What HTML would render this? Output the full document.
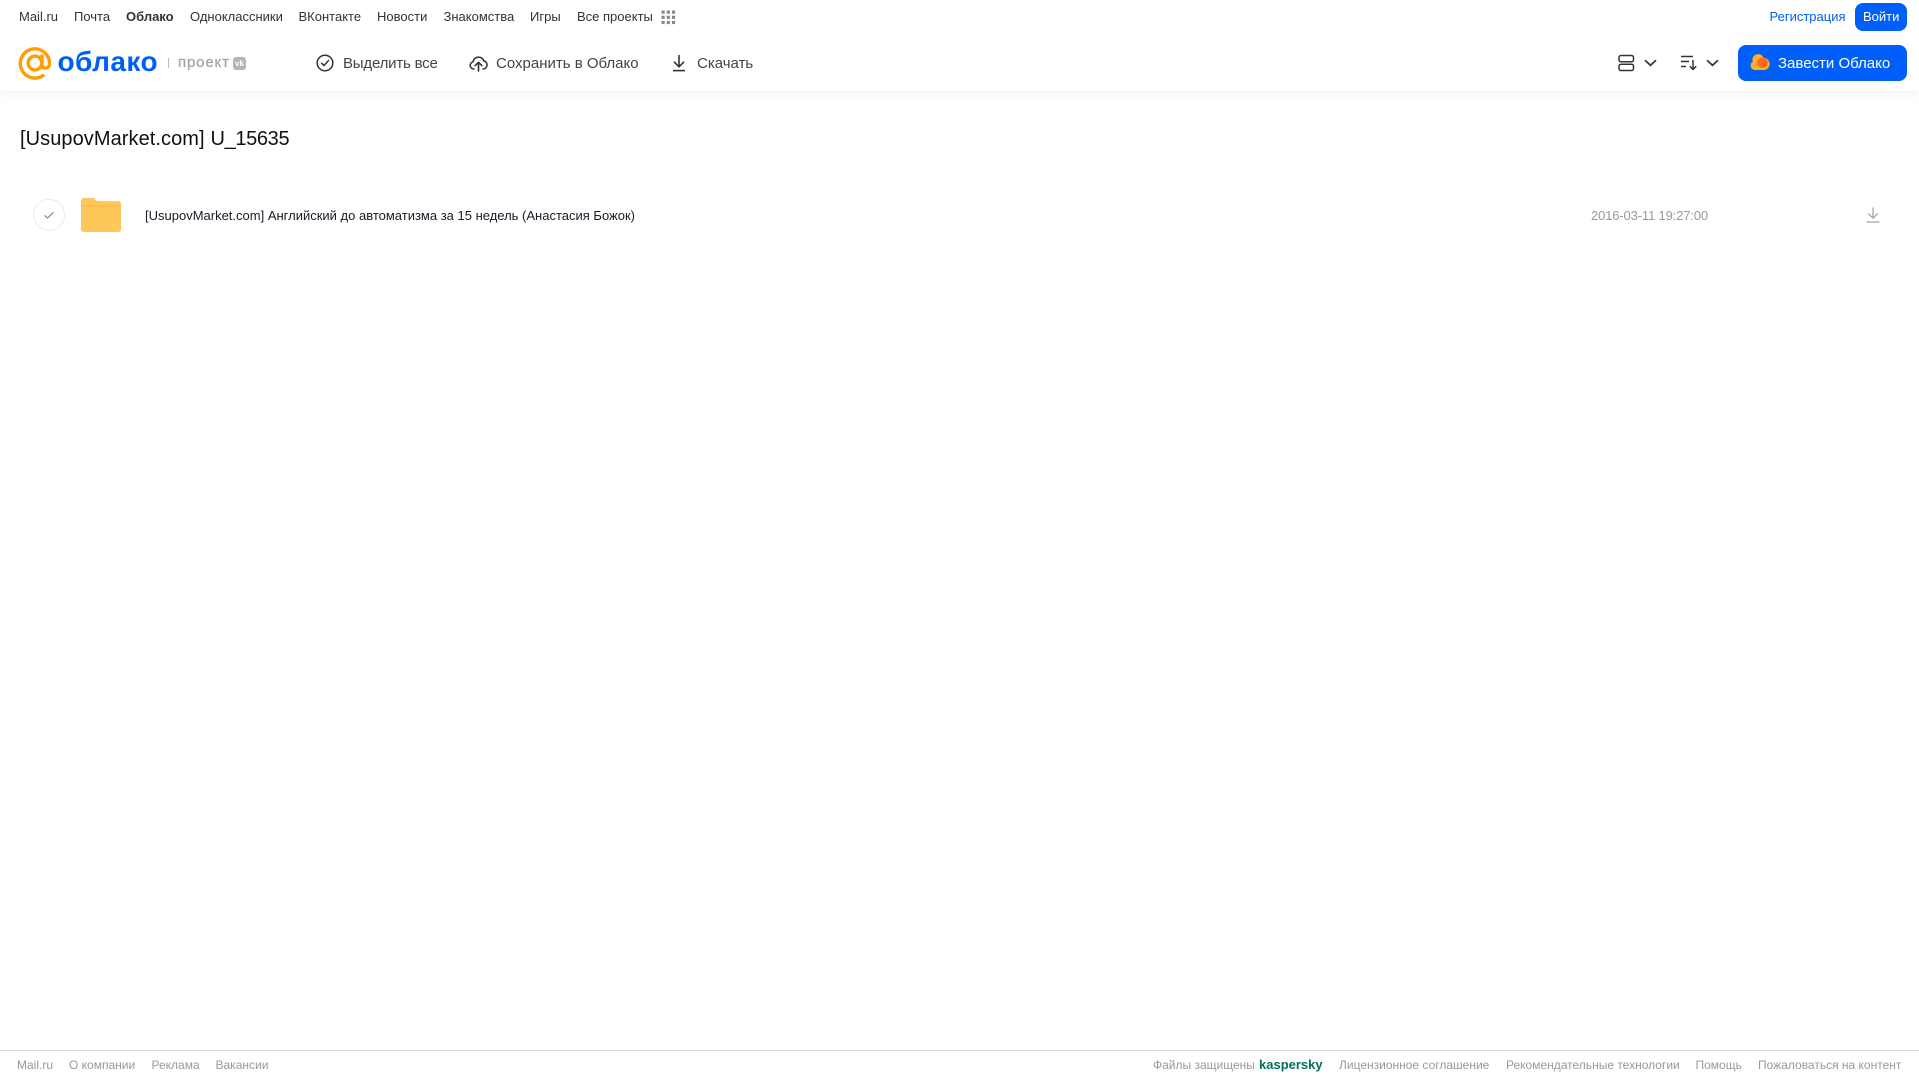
<!DOCTYPE html>
<html lang="ru"><head><meta charset="utf-8"><title>Облако</title>
<style>
*{box-sizing:border-box}
html,body{margin:0;padding:0;width:1919px;height:1079px;overflow:hidden;background:#fff;font-family:"Liberation Sans",Arial,sans-serif}
.t{position:absolute;white-space:nowrap;line-height:20px}
.n{font-size:13px;color:#333;top:7px}
.b{font-size:15px;color:#444;top:54px}
.f{font-size:12px;color:#999;top:1055px}
svg{position:absolute;display:block}
#hd{position:absolute;left:0;top:0;width:1919px;height:91px;background:#fff;box-shadow:0 2px 8px rgba(0,0,0,.07)}
#ft{position:absolute;left:0;top:1050px;width:1919px;height:1px;background:#d9d9d9}
.btn{position:absolute;background:#005ff9;border-radius:8px}
</style></head><body>
<div id="hd"></div>
<span class="t n" style="left:19px">Mail.ru</span>
<span class="t n" style="left:74px">Почта</span>
<span class="t n" style="left:126px;font-weight:bold">Облако</span>
<span class="t n" style="left:190px">Одноклассники</span>
<span class="t n" style="left:298.5px">ВКонтакте</span>
<span class="t n" style="left:377px">Новости</span>
<span class="t n" style="left:443.5px">Знакомства</span>
<span class="t n" style="left:530px">Игры</span>
<span class="t n" style="left:577px">Все проекты</span>
<svg style="left:661px;top:10px" width="15" height="15" viewBox="0 0 15 15" fill="#888"><rect x="0.5" y="0.5" width="3.2" height="3.2"/><rect x="5.7" y="0.5" width="3.2" height="3.2"/><rect x="10.9" y="0.5" width="3.2" height="3.2"/><rect x="0.5" y="5.7" width="3.2" height="3.2"/><rect x="5.7" y="5.7" width="3.2" height="3.2"/><rect x="10.9" y="5.7" width="3.2" height="3.2"/><rect x="0.5" y="10.9" width="3.2" height="3.2"/><rect x="5.7" y="10.9" width="3.2" height="3.2"/><rect x="10.9" y="10.9" width="3.2" height="3.2"/></svg>
<span class="t" style="left:1769.5px;top:7px;font-size:13px;color:#005ff9">Регистрация</span>
<div class="btn" style="left:1855px;top:3px;width:52px;height:28px"></div>
<span class="t" style="left:1863px;top:7px;font-size:13px;color:#fff;font-weight:500">Войти</span>

<svg style="left:18px;top:46px" width="34" height="34" viewBox="0 0 34 34" fill="none" stroke="#ff9e00" stroke-width="3.4"><circle cx="17" cy="17" r="6.9"/><path d="M24 10V19C24 23.5 31.5 23.5 31.5 17.5A14.6 14.6 0 1 0 25 29.6" stroke-linecap="round"/></svg>
<span class="t" style="left:57.5px;top:42px;font-size:28px;line-height:40px;color:#005ff9;font-weight:bold;letter-spacing:.45px">облако</span>
<div style="position:absolute;left:168px;top:58px;width:1px;height:10px;background:#bbb"></div>
<span class="t" style="left:178px;top:53px;font-size:15px;color:#a5a5a5;-webkit-text-stroke:.3px #a5a5a5;letter-spacing:.85px">проект</span>
<div style="position:absolute;left:233px;top:57px;width:13px;height:13px;border-radius:3px;background:#b5b5b5;color:#fff;font:bold 8px/13px 'Liberation Sans',sans-serif;text-align:center">vk</div>

<svg style="left:316px;top:54px" width="18" height="18" viewBox="0 0 18 18" fill="none" stroke="#333" stroke-width="1.5"><circle cx="9" cy="9" r="7.8"/><path d="M5.6 9.2L8 11.6L12.4 6.6" stroke-linecap="round" stroke-linejoin="round"/></svg>
<span class="t b" style="left:343px;letter-spacing:-.2px">Выделить все</span>
<svg style="left:469px;top:54px" width="19" height="18" viewBox="0 0 19 18" fill="none" stroke="#333" stroke-width="1.6"><path d="M5.5 15H4.6A3.6 3.6 0 0 1 4 7.9A5.6 5.6 0 0 1 14.8 6.8A4.2 4.2 0 0 1 14.6 15H13.5" stroke-linejoin="round"/><path d="M9.5 17V8.5M6.2 11.6L9.5 8.3L12.8 11.6" stroke-linecap="round" stroke-linejoin="round"/></svg>
<span class="t b" style="left:496px">Сохранить в Облако</span>
<svg style="left:671px;top:54px" width="16" height="18" viewBox="0 0 16 18" fill="none" stroke="#333" stroke-width="1.6"><path d="M8 1V12.5M3 7.8L8 12.8L13 7.8"/><path d="M2 16.6H14"/></svg>
<span class="t b" style="left:697px">Скачать</span>

<svg style="left:1618px;top:54px" width="17" height="18" viewBox="0 0 17 18" fill="none" stroke="#333" stroke-width="1.5"><rect x="1" y="1.5" width="14.5" height="6.3" rx="2"/><rect x="1" y="10.2" width="14.5" height="6.3" rx="2"/></svg>
<svg style="left:1643.5px;top:59px" width="13" height="8" viewBox="0 0 13 8" fill="none" stroke="#333" stroke-width="1.7"><path d="M1 1.3L6.5 6.3L12 1.3"/></svg>
<svg style="left:1681px;top:55px" width="17" height="16" viewBox="0 0 17 16" fill="none" stroke="#333" stroke-width="1.5"><path d="M0 1.5H12M0 6.5H8M0 11.5H5"/><path d="M12 5V14.5M8.8 11.3L12 14.5L15.2 11.3"/></svg>
<svg style="left:1705.5px;top:59px" width="13" height="8" viewBox="0 0 13 8" fill="none" stroke="#333" stroke-width="1.7"><path d="M1 1.3L6.5 6.3L12 1.3"/></svg>

<div class="btn" style="left:1738px;top:45px;width:169px;height:36px"></div>
<svg style="left:1750px;top:54px" width="20" height="17" viewBox="0 0 20 17"><path d="M5 16A4.4 4.4 0 0 1 2.8 7.8A5.6 5.6 0 0 1 13.5 3.8A6.2 6.2 0 0 1 15 16Z" fill="#ffae2b"/><circle cx="12.5" cy="8.8" r="5.2" fill="#ff6a1a"/></svg>
<span class="t" style="left:1778px;top:54px;font-size:15px;color:#fff">Завести Облако</span>

<span class="t" style="left:20px;top:127px;font-size:20px;line-height:24px;color:#111;letter-spacing:.07px">[UsupovMarket.com]</span>
<span class="t" style="left:210.5px;top:127px;font-size:20px;line-height:24px;color:#111;letter-spacing:-.35px">U_15635</span>

<svg style="left:33px;top:199px" width="32" height="32" viewBox="0 0 32 32" fill="none"><circle cx="16" cy="16" r="15.5" stroke="#ececec"/><path d="M11.5 16.3L14.5 19L20.5 13.2" stroke="#999" stroke-width="1.4"/></svg>
<svg style="left:81px;top:198px" width="40" height="34" viewBox="0 0 40 34"><path d="M0 3A3 3 0 0 1 3 0H12C14 0 14.5 3 17 3H37A3 3 0 0 1 40 6V31A3 3 0 0 1 37 34H3A3 3 0 0 1 0 31Z" fill="#ffc658"/><path d="M0 8H40" stroke="#ffb640" stroke-width="1"/></svg>
<span class="t" style="left:145px;top:206px;font-size:13px;color:#1a1a2a">[UsupovMarket.com] Английский до автоматизма за 15 недель (Анастасия Божок)</span>
<span class="t" style="left:1591px;top:206px;font-size:13px;letter-spacing:-.15px;color:#999">2016-03-11 19:27:00</span>
<svg style="left:1866px;top:207px" width="14" height="16" viewBox="0 0 14 16" fill="none" stroke="#a8a8a8" stroke-width="1.3"><path d="M7 0.5V11M2.2 6.5L7 11.2L11.8 6.5"/><path d="M0.5 15H13.5"/></svg>

<div id="ft"></div>
<span class="t f" style="left:17px">Mail.ru</span>
<span class="t f" style="left:69px">О компании</span>
<span class="t f" style="left:151.5px">Реклама</span>
<span class="t f" style="left:215.5px">Вакансии</span>
<span class="t f" style="left:1153px">Файлы защищены</span>
<span class="t" style="left:1259px;top:1055px;font-size:13px;color:#00705f;font-weight:bold">kaspersky</span>
<span class="t f" style="left:1339px">Лицензионное соглашение</span>
<span class="t f" style="left:1506px">Рекомендательные технологии</span>
<span class="t f" style="left:1695.5px">Помощь</span>
<span class="t f" style="left:1758px">Пожаловаться на контент</span>
</body></html>
